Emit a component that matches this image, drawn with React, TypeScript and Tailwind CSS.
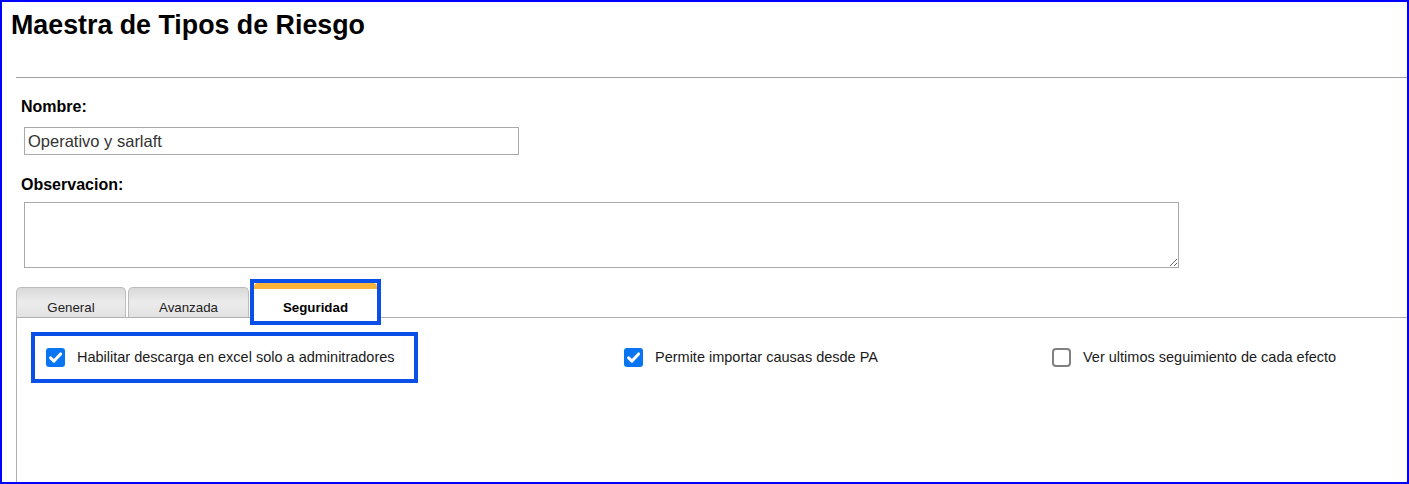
import React from "react";

function CheckBox({ checked }: { checked: boolean }) {
  if (checked) {
    return (
      <span className="flex h-[19px] w-[19px] shrink-0 items-center justify-center rounded-[3px] bg-[#0a75f2]">
        <svg width="19" height="19" viewBox="0 0 19 19">
          <path d="M4.6 9.8 L8 13.1 L14.6 5.9" fill="none" stroke="#ffffff" strokeWidth="3" strokeLinecap="round" strokeLinejoin="round" />
        </svg>
      </span>
    );
  }
  return <span className="block h-[19px] w-[19px] shrink-0 rounded-[4px] border-2 border-[#808080] bg-white" />;
}

function Item({ checked, label }: { checked: boolean; label: string }) {
  return (
    <div className="flex items-center gap-[12px]">
      <CheckBox checked={checked} />
      <span className="text-[14.5px] text-[#1a1a1a] whitespace-nowrap">{label}</span>
    </div>
  );
}

export default function App() {
  return (
    <div className="flex h-[484px] w-[1409px] flex-col overflow-hidden border-2 border-[#0000ff] bg-white font-['Liberation_Sans',Arial,sans-serif] text-black">
      <h1 className="ml-[9px] mt-[8px] text-[26.8px] font-bold leading-[30px]">Maestra de Tipos de Riesgo</h1>
      <div className="ml-[14px] mt-[37px] h-px bg-[#a0a0a0]" />

      <label className="ml-[19px] mt-[20px] block text-[16px] font-bold leading-[18px]">Nombre:</label>
      <input
        readOnly
        value="Operativo y sarlaft"
        className="ml-[22px] mt-[11px] h-[28px] w-[495px] border border-[#a9a9a9] px-[3px] text-[16.5px] text-[#333] outline-none"
      />

      <label className="ml-[19px] mt-[21px] block text-[16px] font-bold leading-[18px]">Observacion:</label>
      <textarea
        readOnly
        className="ml-[22px] mt-[8px] block h-[66px] w-[1155px] resize border border-[#a9a9a9] outline-none"
      />

      <div className="ml-[14px] mt-[11px] flex h-[39px] shrink-0 items-end border-b border-[#b0b0b0]">
        <div className="h-[30px] w-[110px] rounded-t-[5px] border border-b-0 border-[#bcbcbc] bg-gradient-to-b from-[#d9d9d9] via-[#ececec] to-[#e2e2e2] pt-[12px] text-center text-[13.3px] leading-[16px] text-[#222]">
          General
        </div>
        <div className="ml-[2px] h-[30px] w-[121px] rounded-t-[5px] border border-b-0 border-[#bcbcbc] bg-gradient-to-b from-[#d9d9d9] via-[#ececec] to-[#e2e2e2] pt-[12px] text-center text-[13.3px] leading-[16px] text-[#222]">
          Avanzada
        </div>
        <div className="relative z-10 mb-[-8px] ml-[1px] h-[46px] w-[131px] border-4 border-[#0a4fe8] bg-white">
          <div className="h-[6px] rounded-t-[4px] bg-[#fbb33a]" />
          <div className="pt-[11px] text-center text-[13.3px] font-bold leading-[16px]">Seguridad</div>
        </div>
      </div>

      <div className="ml-[14px] flex-1 border-l border-[#b0b0b0]">
        <div className="ml-[14px] mt-[14px] flex items-center">
          <div className="w-[593px]">
            <div className="flex h-[51px] w-[387px] items-center border-4 border-[#0a4fe8] pl-[11px]">
              <Item checked label="Habilitar descarga en excel solo a adminitradores" />
            </div>
          </div>
          <div className="w-[428px]">
            <Item checked label="Permite importar causas desde PA" />
          </div>
          <div>
            <Item checked={false} label="Ver ultimos seguimiento de cada efecto" />
          </div>
        </div>
      </div>
    </div>
  );
}
